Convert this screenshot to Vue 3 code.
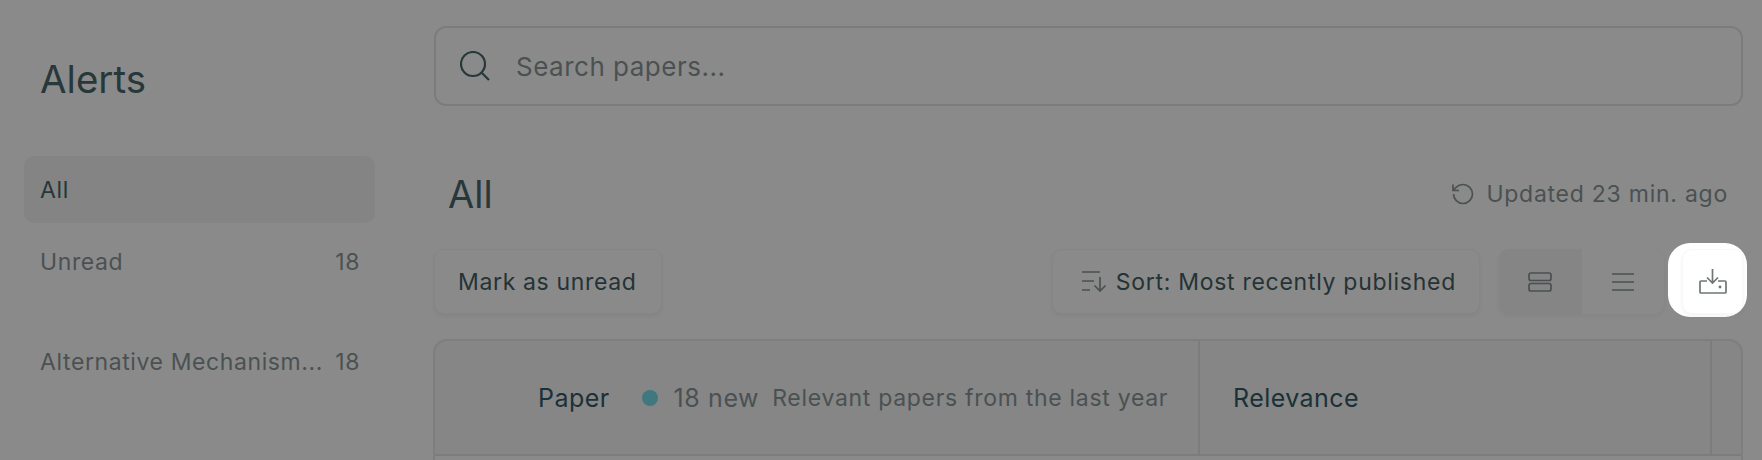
<template>
  <div class="page">
    <aside class="sidebar">
      <h2 class="side-title">Alerts</h2>
      <nav class="side-nav">
        <a class="nav-item active"><span class="nav-label">All</span></a>
        <a class="nav-item unread"><span class="nav-label">Unread</span><span>18</span></a>
        <a class="nav-item topic"><span class="nav-label">Alternative Mechanism...</span><span>18</span></a>
      </nav>
    </aside>

    <main class="content">
      <div class="search">
        <svg class="search-icon" width="30" height="30" viewBox="0 0 30 30" fill="none">
          <circle cx="13" cy="13" r="12" />
          <path d="M21.5 21.5L29 29" />
        </svg>
        <span class="placeholder">Search papers...</span>
      </div>

      <div class="title-row">
        <h1 class="title">All</h1>
        <div class="updated">
          <svg width="24" height="24" viewBox="0 0 24 24" fill="none">
            <path d="M2.5 12a9.5 9.5 0 1 0 9.5-9.5 10 10 0 0 0-6.9 2.9L2 8.5" />
            <path d="M2 2.5v6h6" />
          </svg>
          <span>Updated 23 min. ago</span>
        </div>
      </div>

      <div class="toolbar">
        <button class="btn mark">Mark as unread</button>
        <button class="btn sort">
          <svg width="24" height="21" viewBox="0 0 24 21" fill="none">
            <path d="M0 1h18M0 10h12M0 19h8M18 6v14M12.5 14.5l5.5 5.5 5.5-5.5" />
          </svg>
          <span>Sort: Most recently published</span>
        </button>
        <div class="toggle">
          <span class="seg on">
            <svg width="24" height="20" viewBox="0 0 24 20" fill="none">
              <rect x="1" y="1" width="22" height="7.5" rx="2" />
              <rect x="1" y="11.5" width="22" height="7.5" rx="2" />
            </svg>
          </span>
          <span class="seg">
            <svg width="24" height="18" viewBox="0 0 24 18" fill="none">
              <path d="M1 1h22M1 9h22M1 17h22" />
            </svg>
          </span>
        </div>
        <div class="export">
          <span class="spot"></span>
          <button class="btn export-btn">
            <svg width="28" height="25" viewBox="0 0 28 25" fill="none">
              <path d="M13.5 0v14M8 8.5l5.5 5.5L19 8.5" />
              <path d="M8 12H2a1 1 0 0 0-1 1v10a1 1 0 0 0 1 1h24a1 1 0 0 0 1-1V13a1 1 0 0 0-1-1h-7" />
              <circle cx="21" cy="18" r="1.4" class="dot" />
            </svg>
          </button>
        </div>
      </div>

      <div class="table">
        <div class="thead">
          <div class="th paper">
            <span class="th-name">Paper</span>
            <span class="new-dot"></span>
            <span class="new-count">18 new</span>
            <span class="new-note">Relevant papers from the last year</span>
          </div>
          <div class="th relevance"><span class="th-name">Relevance</span></div>
          <div class="th"></div>
        </div>
        <div class="tbody"></div>
      </div>
    </main>
  </div>
</template>

<script setup>
</script>

<style>
html, body {
  margin: 0;
  background: #8a8a8a;
  overflow: hidden;
}
</style>

<style scoped>
.page {
  display: flex;
  width: 1762px;
  height: 460px;
  overflow: hidden;
  background: #8a8a8a;
  font-family: Inter, "Noto Sans", sans-serif;
  color: #283739;
}

/* sidebar */
.sidebar {
  width: 351px;
  flex-shrink: 0;
  padding: 0 0 0 24px;
}

.side-title {
  margin: 55px 0 0 16px;
  font-size: 38.5px;
  line-height: 48px;
  font-weight: 400;
}

.side-nav {
  margin-top: 53px;
  display: flex;
  flex-direction: column;
}

.nav-item {
  display: flex;
  align-items: center;
  justify-content: space-between;
  height: 67px;
  padding: 0 15px 0 16px;
  border-radius: 10px;
  font-size: 23px;
  letter-spacing: 0.6px;
  color: #4a5152;
}

.nav-item.active {
  background: #848484;
  color: #22383b;
}

.unread {
  margin-top: 5px;
}

.topic {
  margin-top: 33px;
}

/* main column */
.content {
  flex: 1;
  min-width: 0;
  margin-left: 59px;
  margin-right: 19px;
  padding-top: 26px;
}

.search {
  display: flex;
  align-items: center;
  height: 80px;
  box-sizing: border-box;
  padding-left: 24px;
  border: 2px solid #7c7c7c;
  border-radius: 12px;
}

.search-icon circle,
.search-icon path {
  stroke: #283739;
  stroke-width: 2.2;
}

.placeholder {
  margin-left: 26px;
  font-size: 26px;
  letter-spacing: 0.5px;
  color: #4a5152;
}

.title-row {
  display: flex;
  align-items: center;
  justify-content: space-between;
  height: 60px;
  margin-top: 58px;
  padding: 0 15px 0 14px;
}

.title {
  margin: 0;
  font-size: 38px;
  font-weight: 400;
}

.updated {
  display: flex;
  align-items: center;
  gap: 11px;
  font-size: 23px;
  letter-spacing: 0.75px;
  color: #4a5152;
}

.updated svg path {
  stroke: #4a5152;
  stroke-width: 1.7;
}

.toolbar {
  display: flex;
  align-items: stretch;
  height: 65px;
  margin-top: 25px;
}

.btn {
  display: flex;
  align-items: center;
  border: 1px solid #868686;
  border-radius: 10px;
  background: #8a8a8a;
  box-shadow: 0 2px 4px rgba(0, 0, 0, 0.05);
  font-family: inherit;
  font-size: 23px;
  letter-spacing: 0.65px;
  color: #243335;
  padding: 0;
}

.mark {
  padding: 0 24px 0 23px;
}

.sort {
  margin-left: auto;
  gap: 10px;
  padding: 0 23px 0 29px;
  letter-spacing: 0.72px;
}

.sort path {
  stroke: #4a5152;
  stroke-width: 1.7;
}

.toggle {
  display: flex;
  margin-left: 19px;
  border-radius: 10px;
  overflow: hidden;
  box-shadow: 0 2px 4px rgba(0, 0, 0, 0.05);
}

.seg {
  display: flex;
  align-items: center;
  justify-content: center;
  width: 82px;
  background: #8a8a8a;
}

.seg.on {
  background: #858585;
  border-right: 1px solid #868686;
}

.seg rect,
.seg path {
  stroke: #4a5152;
  stroke-width: 1.7;
}

.export {
  position: relative;
  margin-left: 18px;
  width: 61px;
}

/* white cut-out of the tour highlight, sits behind the button */
.spot {
  position: absolute;
  inset: -6px -4px -3px -14px;
  border-radius: 22px;
  background: #fff;
}

.export-btn {
  position: relative;
  justify-content: center;
  width: 100%;
  height: 100%;
  border-color: #f8f8f8;
  background: #fff;
}

.export-btn path {
  stroke: #6f7575;
  stroke-width: 1.7;
}

.export-btn .dot {
  fill: #6f7575;
}

/* table */
.table {
  margin-top: 25px;
  height: 200px;
  margin-left: -1px;
  box-sizing: border-box;
  border: 2px solid #7e7e7e;
  border-bottom: 0;
  border-radius: 14px 14px 0 0;
  background: #868686;
}

.thead {
  display: grid;
  grid-template-columns: 765px 512px 1fr;
  height: 113px;
  border-bottom: 2px solid #7c7c7c;
}

.th {
  display: flex;
  align-items: center;
  border-right: 2px solid #7c7c7c;
}

.th:last-child {
  border-right: 0;
}

.th-name {
  font-size: 25px;
  letter-spacing: 0.45px;
  color: #1a3138;
}

.paper {
  padding-left: 103px;
}

.relevance {
  padding-left: 33px;
}

.new-dot {
  width: 16px;
  height: 16px;
  margin-left: 32px;
  border-radius: 50%;
  background: #3f787e;
}

.new-count {
  margin-left: 16px;
  font-size: 25px;
  letter-spacing: 0.6px;
  color: #4a5152;
}

.new-note {
  margin-left: 13px;
  font-size: 23px;
  letter-spacing: 0.7px;
  color: #4a5152;
  white-space: nowrap;
}

.tbody {
  background: #8a8a8a;
  height: 100%;
}
</style>
